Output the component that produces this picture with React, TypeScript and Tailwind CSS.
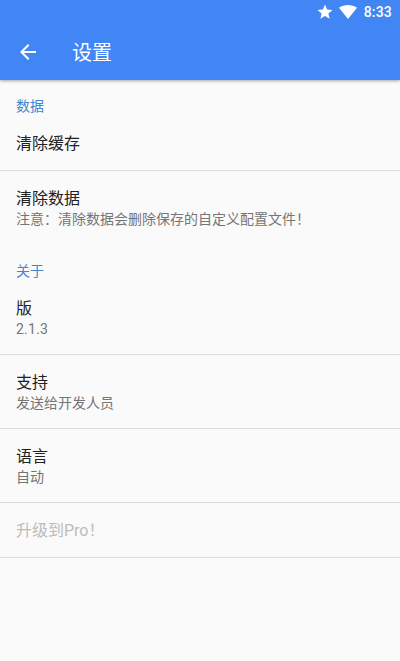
import React from "react";

type RowProps = {
  title: string;
  summary?: string;
  height: string;
  divider?: boolean;
  disabled?: boolean;
  tracking?: string;
};

function Row({ title, summary, height, divider = false, disabled = false, tracking = "" }: RowProps) {
  return (
    <div className={`${height} flex flex-col justify-center px-4 ${divider ? "border-b border-[#dadada]" : ""}`}>
      <div
        className={`text-base leading-[22px] ${summary ? "" : "pt-0.5"} ${disabled ? "text-[#bcbcbc]" : "text-[#212121]"}`}
      >
        {title}
      </div>
      {summary && <div className={`text-sm leading-[18px] text-[#757575] ${tracking}`}>{summary}</div>}
    </div>
  );
}

function Section({ title, height }: { title: string; height: string }) {
  return <h2 className={`${height} flex items-end px-4 text-sm leading-5 text-[#4285d0]`}>{title}</h2>;
}

export default function App() {
  return (
    <div className="h-[661px] w-[400px] overflow-hidden bg-[#fafafa] font-['Roboto','Noto_Sans_CJK_SC',sans-serif]">
      <header className="relative h-20 bg-[#4285f4] text-white shadow-[0_1px_3px_rgba(0,0,0,0.35)]">
        <div className="flex h-6 items-center justify-end pr-2">
          <svg className="mr-[5px] size-[18px]" viewBox="0 0 24 24" fill="currentColor">
            <path d="M12 17.27 18.18 21l-1.64-7.03L22 9.24l-7.19-.61L12 2 9.19 8.63 2 9.24l5.46 4.73L5.82 21z" />
          </svg>
          <svg className="mr-[7px] h-[14px] w-[18px]" viewBox="0 0 18 14" fill="currentColor">
            <path d="M9 14 0 2.8C5.4-.9 12.6-.9 18 2.8z" />
          </svg>
          <span className="text-sm font-medium leading-6 tracking-[0.2px]">8:33</span>
        </div>
        <div className="flex h-14 items-center pl-4">
          <svg className="size-6" viewBox="0 0 24 24" fill="currentColor">
            <path d="M20 11H7.83l5.59-5.59L12 4l-8 8 8 8 1.41-1.41L7.83 13H20z" />
          </svg>
          <h1 className="ml-8 pt-0.5 text-xl leading-7">设置</h1>
        </div>
      </header>
      <main>
        <Section title="数据" height="h-9" />
        <Row title="清除缓存" height="h-[55px]" divider />
        <Row title="清除数据" summary="注意：清除数据会删除保存的自定义配置文件！" height="h-[74px]" />
        <Section title="关于" height="h-9" />
        <Row title="版" summary="2.1.3" height="h-[74px]" tracking="tracking-[0.25px]" divider />
        <Row title="支持" summary="发送给开发人员" height="h-[74px]" divider />
        <Row title="语言" summary="自动" height="h-[74px]" divider />
        <Row title="升级到Pro！" height="h-[55px]" divider disabled />
      </main>
    </div>
  );
}
